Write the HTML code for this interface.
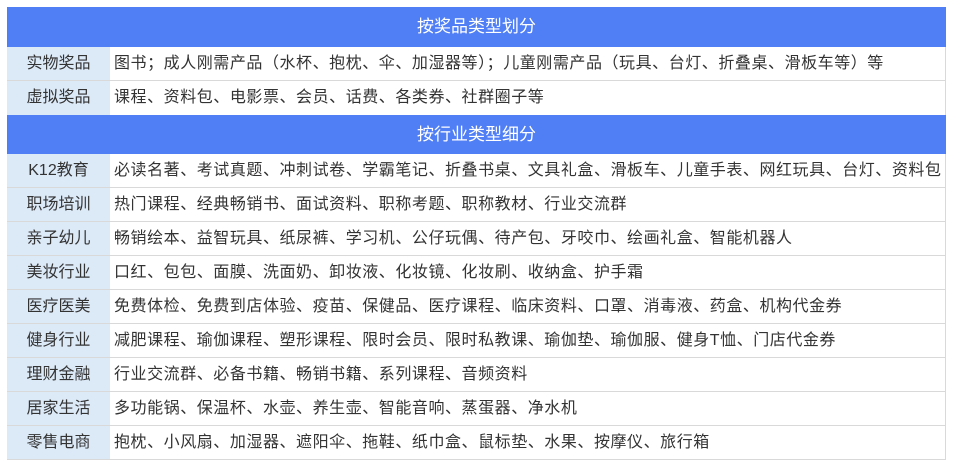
<!DOCTYPE html><html><head><meta charset="utf-8"><style>
body{margin:0;background:#fff;font-family:"Liberation Sans","Noto Sans CJK SC",sans-serif;}
.t{position:absolute;left:7px;top:7px;width:939px;}
.h{background:#4f7ef5;color:#fff;text-align:center;font-size:17px;height:40px;line-height:40px;}
.r{display:flex;height:34px;border-bottom:1px solid #d9d9d9;box-sizing:border-box;border-right:1px solid #d9d9d9;}
.l{width:103px;background:#dce9f7;color:#333;font-size:16px;text-align:center;line-height:34px;flex:none;}
.c{padding-left:4px;color:#333;font-size:16px;line-height:34px;white-space:nowrap;letter-spacing:0.55px;}
</style></head><body><div class="t">
<div class="h">按奖品类型划分</div>
<div class="r"><div class="l">实物奖品</div><div class="c">图书；成人刚需产品（水杯、抱枕、伞、加湿器等）；儿童刚需产品（玩具、台灯、折叠桌、滑板车等）等</div></div>
<div class="r" style="border-bottom:none"><div class="l">虚拟奖品</div><div class="c">课程、资料包、电影票、会员、话费、各类券、社群圈子等</div></div>
<div class="h" style="height:39px;line-height:39px">按行业类型细分</div>
<div class="r"><div class="l">K12教育</div><div class="c">必读名著、考试真题、冲刺试卷、学霸笔记、折叠书桌、文具礼盒、滑板车、儿童手表、网红玩具、台灯、资料包</div></div>
<div class="r"><div class="l">职场培训</div><div class="c">热门课程、经典畅销书、面试资料、职称考题、职称教材、行业交流群</div></div>
<div class="r"><div class="l">亲子幼儿</div><div class="c">畅销绘本、益智玩具、纸尿裤、学习机、公仔玩偶、待产包、牙咬巾、绘画礼盒、智能机器人</div></div>
<div class="r"><div class="l">美妆行业</div><div class="c">口红、包包、面膜、洗面奶、卸妆液、化妆镜、化妆刷、收纳盒、护手霜</div></div>
<div class="r"><div class="l">医疗医美</div><div class="c">免费体检、免费到店体验、疫苗、保健品、医疗课程、临床资料、口罩、消毒液、药盒、机构代金券</div></div>
<div class="r"><div class="l">健身行业</div><div class="c">减肥课程、瑜伽课程、塑形课程、限时会员、限时私教课、瑜伽垫、瑜伽服、健身T恤、门店代金券</div></div>
<div class="r"><div class="l">理财金融</div><div class="c">行业交流群、必备书籍、畅销书籍、系列课程、音频资料</div></div>
<div class="r"><div class="l">居家生活</div><div class="c">多功能锅、保温杯、水壶、养生壶、智能音响、蒸蛋器、净水机</div></div>
<div class="r"><div class="l">零售电商</div><div class="c">抱枕、小风扇、加湿器、遮阳伞、拖鞋、纸巾盒、鼠标垫、水果、按摩仪、旅行箱</div></div>
</div></body></html>
